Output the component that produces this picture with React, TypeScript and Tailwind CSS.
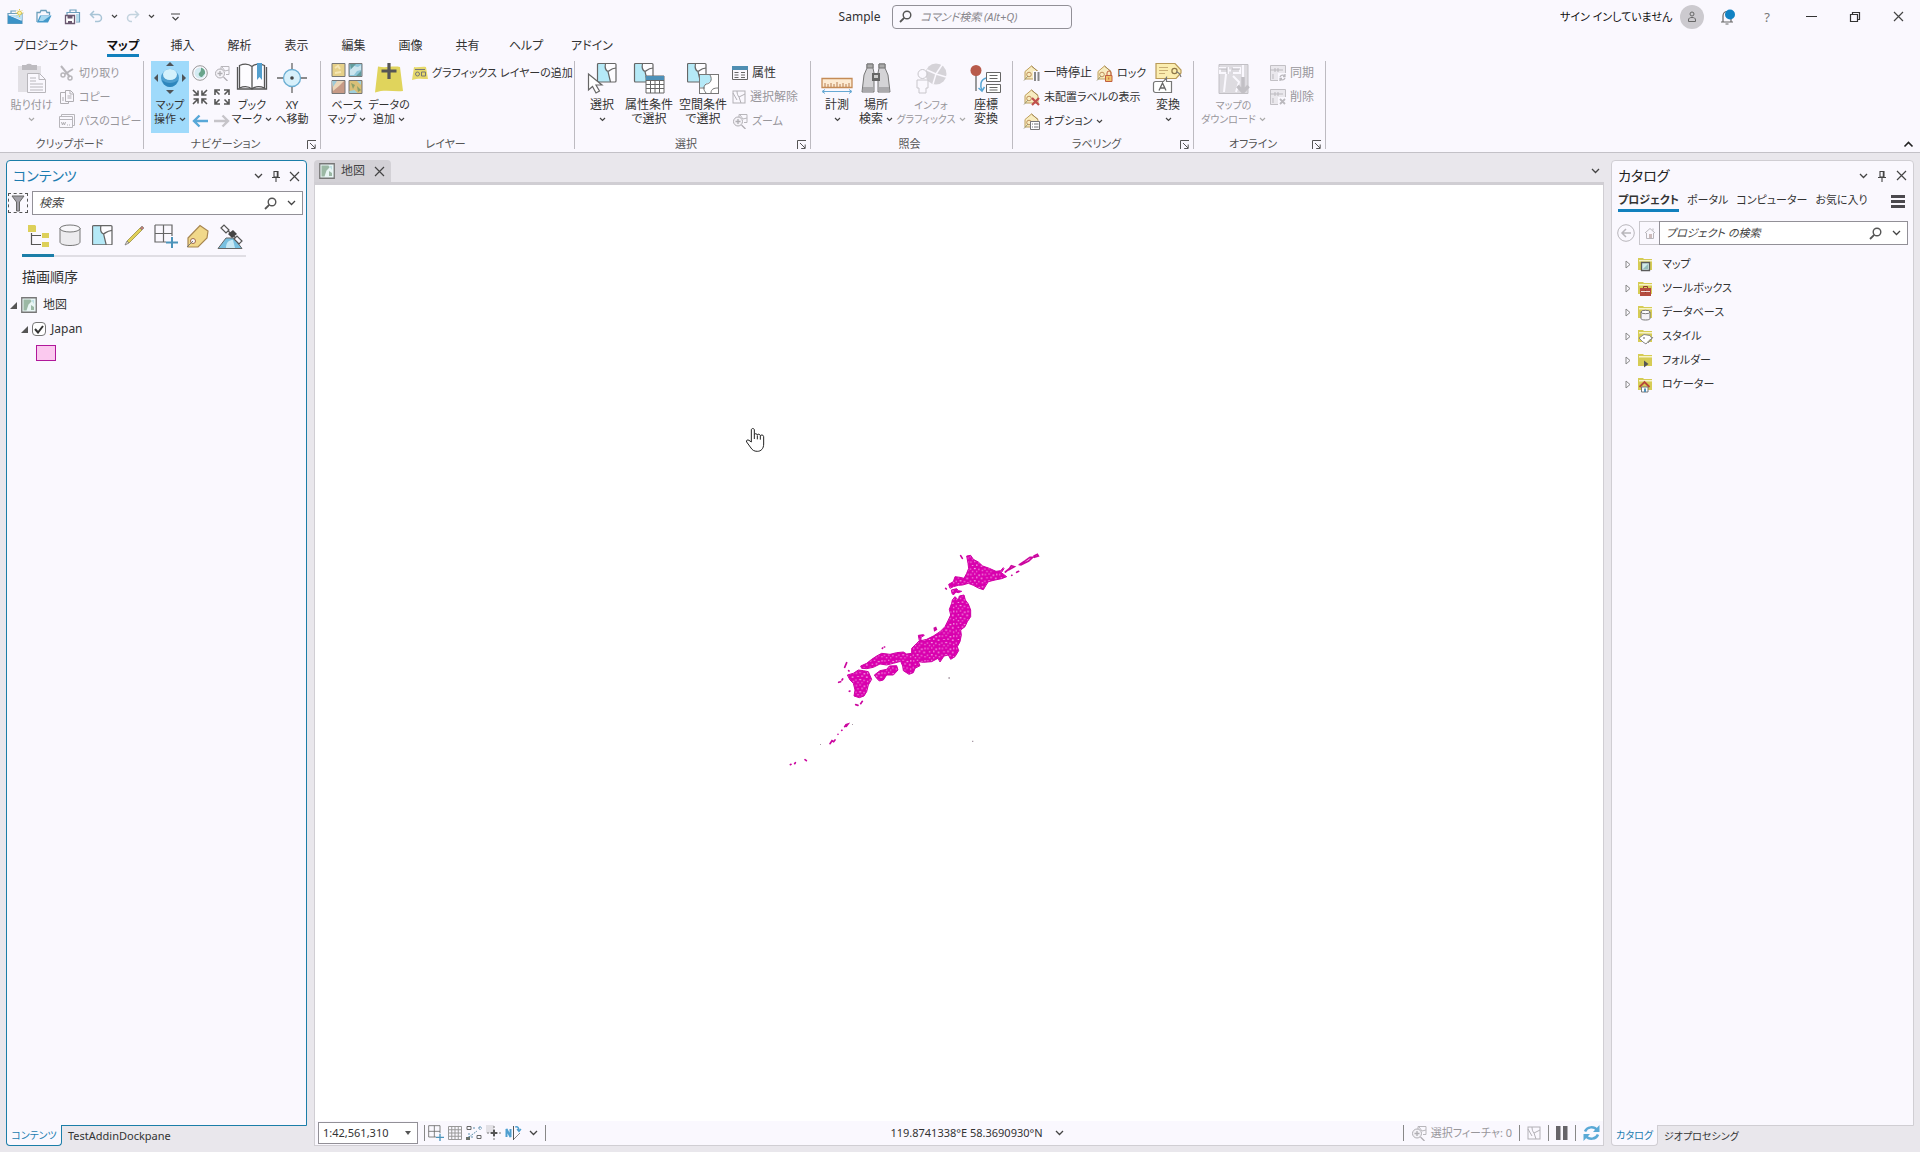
import React, { useState } from "react";
import type { ReactNode } from "react";

type Kids = { children?: ReactNode };

function Svg({ w, h, vb, children }: { w: number; h: number; vb?: string } & Kids) {
  return (
    <svg width={w} height={h} viewBox={vb ?? `0 0 ${w} ${h}`} fill="none" className="shrink-0" aria-hidden="true">
      {children}
    </svg>
  );
}

/* ---------- shared small glyphs ---------- */
const Chevron = ({ color = "#444" }: { color?: string }) => (
  <Svg w={7} h={5}><path d="M1 1l2.5 2.5L6 1" stroke={color} strokeWidth="1.2" /></Svg>
);
const ChevronWide = () => (
  <Svg w={9} h={6}><path d="M1 1l3.5 3.5L8 1" stroke="#444" strokeWidth="1.3" /></Svg>
);
const Pin = () => (
  <Svg w={10} h={12}><path d="M3 1.5h4V7H3zM6.3 1.5V7M1 7.5h8M5 8v4" stroke="#444" strokeWidth="1.1" /></Svg>
);
const Close = () => (
  <Svg w={11} h={11}><path d="M1 1l9 9M10 1l-9 9" stroke="#444" strokeWidth="1.2" /></Svg>
);
const Search = () => (
  <Svg w={13} h={13}><circle cx="8" cy="5" r="3.8" stroke="#555" strokeWidth="1.4" /><path d="M5.2 7.8L1 12" stroke="#555" strokeWidth="1.8" /></Svg>
);
const Expanded = () => <Svg w={7} h={7}><path d="M7 0v7H0z" fill="#555" /></Svg>;
const Collapsed = () => <Svg w={6} h={9}><path d="M1 1l4 3.5L1 8z" stroke="#888" /></Svg>;
const Launcher = () => (
  <Svg w={9} h={9}><path d="M.5 9V.5H9" stroke="#555" /><path d="M3 3l5 5M8.2 4.5v4h-4" stroke="#555" /></Svg>
);

/* ---------- quick access icons ---------- */
const NewProject = () => (
  <Svg w={17} h={16}>
    <path d="M1 4.5h14v10H1zM4 4V2h5" stroke="#6d9fbc" strokeWidth="1.2" /><path d="M1 6l14 6v2.500H1z" fill="#3b93c7" /><path d="M1 6h14v5L7 8z" fill="#b9e0f3" />
    <circle cx="12.500" cy="4" r="2" fill="#fff3a8" stroke="#dcc64a" /><path d="M12.500 0v1M12.500 7v1M8.500 4h1M15.500 4h1M9.800 1.300l.6.6M15.200 1.300l-.6.6M9.800 6.700l.6-.6" stroke="#dcc64a" />
  </Svg>
);
const OpenProject = () => (
  <Svg w={16} h={15}><path d="M1 13V3.500h3l1-2h5l1 2h2.500V6" stroke="#6d9fbc" strokeWidth="1.300" /><path d="M4 6.500h11.500L12 13.500H1z" fill="#4398c9" /><path d="M5 7h9l-7 5H3z" fill="#a9d8f0" /></Svg>
);
const SaveProject = () => (
  <Svg w={17} h={16}><path d="M3 6V3.500h12.500V13H12M6 3V1h6v2" stroke="#6d9fbc" strokeWidth="1.200" /><path d="M12 5h3v7h-3z" fill="#b6dcec" /><path d="M1.500 6.500h9v8h-9z" stroke="#6b5870" strokeWidth="1.300" fill="#fff" /><path d="M3.500 7h5v2.500h-5zM4 12h4v2.500H4z" fill="#6b5870" /></Svg>
);
const Undo = () => <Svg w={14} h={13}><path d="M5 1L1.500 4.500 5 8M1.500 4.500H9a3.500 3.500 0 010 7H6" stroke="#a8c4d6" strokeWidth="1.500" /></Svg>;
const Redo = () => <Svg w={14} h={13}><path d="M9 1l3.500 3.500L9 8M12.500 4.500H5a3.500 3.500 0 000 7h1" stroke="#c3d3de" strokeWidth="1.500" /></Svg>;

/* ---------- clipboard icons ---------- */
const Paste = () => (
  <Svg w={30} h={32}>
    <rect x="1" y="4" width="23" height="26" fill="#e2e0e5" /><path d="M5 3h4a3.500 2.500 0 016 0h5v5H5z" fill="#bdbbc0" />
    <path d="M10.500 11.500h12l6 6v13h-18z" fill="#faf8fe" stroke="#b8b6bb" /><path d="M22 11.500v6h6M13 16h6M13 19h6M13 22h13M13 25h13M13 28h13" stroke="#b8b6bb" />
  </Svg>
);
const Cut = () => <Svg w={16} h={16}><path d="M2 1l9 11M14 4L6 9" stroke="#b8b6bb" strokeWidth="2" /><circle cx="4" cy="10" r="2" stroke="#b8b6bb" strokeWidth="1.500" /><circle cx="11" cy="13" r="2" stroke="#b8b6bb" strokeWidth="1.500" /></Svg>;
const Copy = () => <Svg w={16} h={16}><path d="M1.500 3.500h5l3 3v8h-8z" stroke="#b0aeb3" /><path d="M6.500 1.500h5l3 3v8h-8z" fill="#faf8fe" stroke="#b0aeb3" /><path d="M11 1.500V5h3M8.500 7h4M8.500 9h4M3 9h2M3 11h2" stroke="#b0aeb3" /></Svg>;
const CopyPath = () => <Svg w={16} h={16}><path d="M2.500 3V1.500h13v11H14M.5 3.500h13v11H.5zM.5 6.500h13" stroke="#b8b6bb" /><path d="M2.500 9l1 3 1-2.500 1 2.500 1-3M8 12h1M10 12h1" stroke="#b0aeb3" /></Svg>;

/* ---------- navigation icons ---------- */
const Explore = () => (
  <Svg w={32} h={32}>
    <circle cx="16" cy="16" r="9" fill="#4e9fd0" /><ellipse cx="16" cy="12.500" rx="7" ry="5.500" fill="#d4f1fc" /><path d="M8 18c4 4 12 4 16 0-1 4-4 7-8 7s-7-3-8-7z" fill="#2d86bd" />
    <path d="M16 0l4 4h-8zM16 32l4-4h-8zM0 16l4-4v8zM32 16l-4-4v8z" fill="#4f5358" />
  </Svg>
);
const Globe = () => <Svg w={16} h={16}><circle cx="8" cy="8" r="7.300" stroke="#999" /><circle cx="8" cy="8" r="5.500" fill="#d4ebf2" /><path d="M9 2.500c3 1 4.500 3 4 6l-3 3.500c-2 0-4-2-3-4 2-1 2-3 2-5.500z" fill="#69a48b" /></Svg>;
const ZoomSel = () => <Svg w={16} h={16}><path d="M7 1.500h8v8h-3M7 1.500V5M15 5l-4 1-3-4" stroke="#b8b6bb" /><circle cx="6" cy="8.500" r="4.500" fill="#f4f2f7" stroke="#b0aeb3" /><path d="M3.500 8.500h5M6 6v5M9.500 12l4 4" stroke="#b0aeb3" strokeWidth="1.300" /></Svg>;
const ZoomIn = () => <Svg w={16} h={16}><path d="M1 1l4.500 4.500M15 1l-4.500 4.500M1 15l4.500-4.500M15 15l-4.500-4.500M1.500 6H6V1.500M14.500 6H10V1.500M1.500 10H6v4.500M14.500 10H10v4.500" stroke="#555" strokeWidth="1.600" /></Svg>;
const ZoomOut = () => <Svg w={16} h={16}><path d="M1.500 1.500l4 4M14.500 1.500l-4 4M1.500 14.500l4-4M14.500 14.500l-4-4M1 6V1h5M15 6V1h-5M1 10v5h5M15 10v5h-5" stroke="#555" strokeWidth="1.600" /></Svg>;
const Prev = () => <Svg w={16} h={14}><path d="M7.500 1.500L2 7l5.500 5.500M2 7h14" stroke="#58a8d8" strokeWidth="2.400" /></Svg>;
const Next = () => <Svg w={16} h={14}><path d="M8.500 1.500L14 7l-5.500 5.500M14 7H0" stroke="#c6c4c9" strokeWidth="2.400" /></Svg>;
const Bookmarks = () => (
  <Svg w={32} h={32}>
    <path d="M1.500 5v22h29V5" stroke="#555" strokeWidth="1.300" /><path d="M3.500 26V3.500C8 1.500 13 2 16 4.500c3-2.500 8-3 12.500-1V26C24 24 19 24.500 16 27c-3-2.500-8-3-12.500-1zM16 4.500V27" fill="#fdfcff" stroke="#555" strokeWidth="1.300" />
    <path d="M21 1h5v17l-2.500-3-2.500 3z" fill="#539fce" />
  </Svg>
);
const GoXY = () => <Svg w={32} h={32}><circle cx="16" cy="16" r="8.500" fill="#d7f0fb" stroke="#6baed3" strokeWidth="1.300" /><circle cx="16" cy="16" r="1.800" fill="#444" /><path d="M16 1v6M16 25v6M1 16h6M25 16h6" stroke="#666" strokeWidth="1.300" /></Svg>;

/* ---------- layer icons ---------- */
const Basemap = () => (
  <Svg w={32} h={32}>
    <path d="M1 1.500h13v13H1z" fill="#e6d089" stroke="#777" /><path d="M4 6l3-2 2 3M4 11l6-1" stroke="#f6e7b5" strokeWidth="2" />
    <path d="M18 1.500h13v13H18z" fill="#8fc5d9" stroke="#777" /><path d="M19 8l4-4 4 1 3-2v5l-4 1-3 4h-4z" fill="#cde5ee" /><path d="M19 2h6l-5 5zM25 14l5-5v5z" fill="#639c9c" />
    <path d="M1 18.500h13v13H1z" fill="#c79a86" stroke="#777" /><path d="M1 19h12L8 24l-6 5z" fill="#ead5b8" /><path d="M1 19h5l-4 6z" fill="#9fcad8" />
    <path d="M18 18.500h13v13H18z" fill="#d9bf77" stroke="#777" /><path d="M20 21l4 2-2 4zM26 24l4 4-3 2z" fill="#8a9f68" /><path d="M18.500 29l5-1 3 3h-8zM26 19h4v4z" fill="#9fd0dd" />
  </Svg>
);
const AddData = () => <Svg w={32} h={32}><path d="M5 4.500c8 2 14-1 22 .5l3 24c-9 1-18-2-28 1.500z" fill="#e0d45c" /><path d="M16 1v16M8.500 9h15" stroke="#555" strokeWidth="3.200" /></Svg>;
const GraphicsLayer = () => <Svg w={16} h={16}><path d="M2 2c4 1 8-1 12 0l2 12c-5 0-10-1-16 1z" fill="#e6d96a" /><path d="M3 4.500h10" stroke="#777" /><circle cx="5.500" cy="9" r="2" stroke="#777" /><path d="M9.500 7h4v4h-4z" stroke="#777" /></Svg>;

/* ---------- selection icons ---------- */
const PolyTile = ({ x = 0, y = 0, s = 19, c = "#666" }: { x?: number; y?: number; s?: number; c?: string }) => (
  <g transform={`translate(${x} ${y}) scale(${s / 19})`}>
    <path d="M.5 .5h18.500v18.500H.5z" fill="#fdfcff" /><path d="M.5 .5h8c-1 4 0 6 2.500 8l2.500 10.500H.5z" fill="#b5e9f7" />
    <path d="M8.500 .5c-1 5 0 7 2.500 8l2.500 10.500M11 8.500c2-1 3-3 8-3.500" stroke={c} strokeWidth="1.200" /><rect x=".5" y=".5" width="18.500" height="18.500" rx="1" stroke={c} strokeWidth="1.200" />
  </g>
);
const SelectTool = () => <Svg w={32} h={32}><PolyTile x={11} y={1} /><path d="M2.500 12v16l4-3.500 3.500 6.500 3.500-2L10 23h6z" fill="#fff" stroke="#666" strokeWidth="1.200" /></Svg>;
const SelectAttr = () => <Svg w={32} h={32}><PolyTile x={1} y={1} /><path d="M13 14h18v17H13z" fill="#fff" stroke="#666" /><path d="M13 14h18v4H13z" fill="#4d90b8" /><path d="M13 18.500h18M13 22.500h18M13 26.500h18M17.500 18v13M22 18v13M26.500 18v13" stroke="#666" /></Svg>;
const SelectLoc = () => <Svg w={32} h={32}><PolyTile x={0} y={1} /><rect x="12.500" y="12.500" width="19" height="19" fill="#fff" stroke="#777" /><path d="M13 13h10c3 5 0 9-4 8l-2 5-4-1z" fill="#b5e9f7" /><path d="M23 13c3 5 0 9-4 9-3 3-3 5 0 9M13 26h5M24 31c0-4 3-5 7-5" stroke="#777" /></Svg>;
const Attributes = () => <Svg w={16} h={14}><path d="M.5 .5h15v13H.5z" stroke="#666" /><path d="M0 0h16v4H0z" fill="#4f8eb2" /><path d="M2.500 6.500h4M9 6.500h4M2.500 9h4M9 9h4M2.500 11.500h4M9 11.500h4" stroke="#666" /></Svg>;
const ClearSel = () => <Svg w={14} h={14}><rect x="1" y="1" width="12" height="12" stroke="#b2b0b5" /><path d="M5 1c0 3 1 5 2 6l2 6M7 7l6-3M1 3l4 7" stroke="#b2b0b5" /></Svg>;

/* ---------- inquiry icons ---------- */
const Measure = () => <Svg w={32} h={32}><path d="M1 16.500h30v9H1z" fill="#fdebd3" stroke="#c58b56" strokeWidth="1.300" /><path d="M4 25v-4M7 25v-3M10 25v-4M13 25v-3M16 25v-5M19 25v-3M22 25v-4M25 25v-3M28 25v-4" stroke="#b87f50" /><path d="M2 29.500h28M4 27.500l-3 2 3 2M28 27.500l3 2-3 2" stroke="#68a9d3" /></Svg>;
const Binoculars = () => <Svg w={32} h={32}><path d="M7 2h6v4l1 5v19H2l2-17 3-7zM19 2h6v4l3 7 2 17H18V11l1-5z" fill="#d4d3d6" stroke="#777" /><path d="M7 2h6v4H7zM19 2h6v4h-6z" fill="#aaa" stroke="#777" /><path d="M12 11h8v8h-8z" fill="#666" /><path d="M14 13h4v3h-4z" fill="#ccc" /><path d="M3 25h10v5H3zM19 25h10v5H19z" fill="#aaa9ac" /></Svg>;
const Infographics = () => <Svg w={32} h={32}><circle cx="21" cy="12" r="10.500" fill="#d5d3d8" /><path d="M21 12l6-9M21 12l10 3M21 12l-3 10M21 12L12 8" stroke="#faf8fe" strokeWidth="1.500" /><circle cx="7.500" cy="12" r="4.500" fill="#faf8fe" stroke="#c8c6cb" /><path d="M2 18h11v8h-2v5H4v-5H2z" fill="#faf8fe" stroke="#c8c6cb" /></Svg>;
const CoordConv = () => <Svg w={32} h={32}><path d="M6 9v20" stroke="#666" strokeWidth="1.300" /><circle cx="6" cy="8.500" r="5.500" fill="#b85a4b" /><path d="M16.500 10.500h14v9h-14zM16.500 22.500h14v8h-14z" fill="#fff" stroke="#666" /><path d="M19.500 13.500h8M19.500 16.500h8M19.500 25.500h8M19.500 28h8" stroke="#666" /><path d="M16 16c-6 2-6 8-4 12M8.500 26l3.500 3 2.500-4" stroke="#57a5d4" strokeWidth="1.500" /></Svg>;

/* ---------- labeling icons ---------- */
const TagHouse = ({ children }: Kids) => (
  <Svg w={17} h={17}>
    <path d="M2 14V6.500L8.500 1 15 6.500V14z" fill="#f8ecc0" stroke="#bf9f5c" /><path d="M8.500 1l6.500 5.500" stroke="#a58a58" /><circle cx="6" cy="9.500" r="2.300" stroke="#bf8f5a" /><path d="M1 15.500L5 11" stroke="#997" />
    {children}
  </Svg>
);
const LabelPause = () => <TagHouse><path d="M10 6h7v11h-7z" fill="#faf8fe" /><path d="M12 7v9M15.500 7v9" stroke="#888" strokeWidth="2" /></TagHouse>;
const LabelLock = () => <TagHouse><path d="M9.500 10.500h6.500v6H9.500z" fill="#f0c36a" stroke="#c15f40" /><path d="M11 10V8a2 2 0 014 0v2" stroke="#c15f40" /><path d="M12.750 12.500v2" stroke="#c15f40" /></TagHouse>;
const LabelUnplaced = () => <TagHouse><path d="M9 9l7 7M16 9l-7 7" stroke="#c0504d" strokeWidth="2.200" /></TagHouse>;
const LabelOptions = () => <TagHouse><path d="M7.500 8.500h9v8h-9z" fill="#fff" stroke="#777" /><path d="M9 11h1M11 11h4.500M9 14h1M11 14h4.500" stroke="#777" /></TagHouse>;
const LabelConvert = () => <Svg w={32} h={32}><path d="M4 1.500h19l6 6.500v3l-5 5.500H4z" fill="#fbedb0" stroke="#b99a58" strokeWidth="1.200" /><path d="M7 5.500h9M7 8.500h9M7 11.500h6" stroke="#c9ae74" /><circle cx="22.500" cy="9" r="2.600" stroke="#8f7747" strokeWidth="1.200" /><path d="M24 10c3 0 4 2 5 5" stroke="#777" strokeWidth="1.200" /><path d="M3.500 19.500h8l3-4v4h5v11h-16a2 2 0 01-2-2v-7a2 2 0 012-2z" fill="#fff" stroke="#777" strokeWidth="1.200" /><path d="M7 28.500l3.500-7.500 3.500 7.500M8.300 26h4.400" stroke="#666" strokeWidth="1.300" /></Svg>;

/* ---------- offline icons ---------- */
const DownloadMap = () => <Svg w={32} h={32}><path d="M1 2.500h29v29H1z" fill="#dddbe0" stroke="#c2c0c5" /><path d="M2 6h8v5H2zM14 6h8v5h-8zM10 8.500h4M25 3v14M8 12l-2 18M15 14l6 6-3 10" stroke="#faf8fe" strokeWidth="2" /><path d="M1 7h8M14 7h8M9 5v7M14 5v7" stroke="#bbb9be" /><path d="M25 15v14M19.500 24l5.500 6 5.500-6" stroke="#c2c0c5" strokeWidth="3.500" /></Svg>;
const OfflineSmall = ({ x }: { x?: boolean }) => <Svg w={16} h={16}><path d="M.5 .5h15v15H.5z" fill="#eae8ed" stroke="#c2c0c5" /><path d="M0 5h5M8 5h5M5 3v4M8 3v4M5 5h3M3 9v5" stroke="#bbb9be" /><path d="M8 8h8v8H8z" fill="#faf8fe" />{x ? <path d="M10 10l5 5M15 10l-5 5" stroke="#bbb9be" strokeWidth="1.800" /> : <path d="M10 12a3 3 0 015-1M15 13a3 3 0 01-5 1M15 9v2.500h-2M10 16v-2.500h2" stroke="#bbb9be" strokeWidth="1.300" />}</Svg>;

/* ---------- ribbon parts ---------- */
const sizes = { base: "text-[12px]", small: "text-[11px]", tiny: "text-[10px]" };
type Size = keyof typeof sizes;

function Big({ icon, lines, w, off, arrow, on, size = "base" }: { icon: ReactNode; lines: [string, string?]; w: string; off?: boolean; arrow?: boolean; on?: boolean; size?: Size }) {
  const c = off ? "#aaa" : "#444";
  return (
    <button className={`flex h-[72px] shrink-0 flex-col items-center pt-px ${w} ${on ? "bg-[#9fdafb]" : ""} ${off ? "text-[#98969b]" : "text-[#333]"}`}>
      {icon}
      <span className={`mt-1 whitespace-nowrap text-center leading-[14px] ${sizes[size]}`}>{lines[0]}</span>
      <span className={`flex h-[14px] items-center justify-center gap-[3px] whitespace-nowrap leading-[14px] ${sizes[size]}`}>
        {lines[1]}
        {arrow && <Chevron color={c} />}
      </span>
    </button>
  );
}
function Row({ icon, text, off, arrow, size = "base" }: { icon: ReactNode; text: string; off?: boolean; arrow?: boolean; size?: Size }) {
  return (
    <button className={`flex h-6 items-center gap-1 whitespace-nowrap ${sizes[size]} ${off ? "text-[#98969b]" : "text-[#333]"}`}>
      {icon}
      {text}
      {arrow && <Chevron />}
    </button>
  );
}
function Group({ w, name, launcher, children }: { w: string; name: string; launcher?: boolean } & Kids) {
  return (
    <section className={`flex h-[88px] shrink-0 flex-col border-r border-[#bdbbc1] ${w}`}>
      <div className="flex flex-1 items-start">{children}</div>
      <div className="flex h-[10px] items-center pr-1 text-[11px] leading-[10px] text-[#555]">
        <span className="flex-1 text-center">{name}</span>
        {launcher && <button aria-label={`${name} オプション`}><Launcher /></button>}
      </div>
    </section>
  );
}

/* ---------- contents pane icons ---------- */
const Funnel = () => <Svg w={14} h={17}><path d="M1 1h12L8.500 7v9h-3V7z" fill="#a3a1a9" stroke="#666" /></Svg>;
const TreeIcon = () => <Svg w={24} h={24}><path d="M2 1h7l1 1v6H2zM16 9h7v5h-7zM16 18h7v5h-7z" fill="#ddd05a" /><path d="M5.500 9v11.500H15M5.500 11.500H15" stroke="#555" strokeWidth="1.200" /></Svg>;
const Cylinder = () => <Svg w={22} h={22}><path d="M1 4v14c0 2 4 3.500 10 3.500s10-1.500 10-3.500V4" fill="#ecebee" stroke="#777" /><ellipse cx="11" cy="4.500" rx="10" ry="3.500" fill="#f8f7fa" stroke="#777" /></Svg>;
const Pencil = () => <Svg w={22} h={22}><path d="M4 17L17 4l2 2L6 19z" fill="#e0d058" stroke="#9b8f45" strokeWidth=".8" /><path d="M17 4l2-2 2 2-2 2z" fill="#c07f72" stroke="#777" strokeWidth=".6" /><path d="M4 17l-2 4 4-2z" fill="#e8d9c4" stroke="#777" strokeWidth=".8" /></Svg>;
const GridPlus = ({ s = 24 }: { s?: number }) => <Svg w={s} h={s} vb="0 0 24 24"><path d="M1 1h17v11M1 1v17h11M9.500 1v17M1 9.500h17" stroke="#666" strokeWidth="1.200" /><path d="M18 13v11M12 18.500h12" stroke="#4c93ba" strokeWidth="2" /></Svg>;
const Tag = () => <Svg w={24} h={24}><path d="M2 14L14 1.500l8 5.500-1 7-9 9H2z" fill="#f1d88a" stroke="#a88650" strokeWidth="1.200" /><circle cx="7" cy="17" r="2.500" fill="#faf8fe" stroke="#a06a48" /><path d="M1 23l6-6" stroke="#777" /></Svg>;
const Satellite = () => <Svg w={26} h={26}><path d="M1 24.500L9 14h8l8 10.500z" fill="#78c0e0" stroke="#666" /><path d="M9 24c0-6 3-8 7-8l2 8z" fill="#c8e9f5" /><path d="M9 5l12 11" stroke="#555" strokeWidth="1.200" /><path d="M4 4l3-3 5 5-3 3zM17 15l3-3 5 5-3 3z" fill="#faf8fe" stroke="#555" strokeWidth="1.200" /><path d="M11 10l5-4 4 4-5 4z" fill="#444" /></Svg>;
const MapIcon = () => <Svg w={16} h={16}><path d="M.75 .75h14.500v14.500H.75z" fill="#e8f5f4" stroke="#777" strokeWidth="1.300" /><path d="M2.500 2.500h7l1 2-3 3-2 6h-3zM10 8l3 2v3h-3z" fill="#9bb8a4" /><path d="M10 3h3v4z" fill="#bfe0e4" /></Svg>;

/* ---------- catalog icons ---------- */
const Folder = ({ children }: Kids) => (
  <Svg w={17} h={17}><path d="M1 2h5l1 1h8v11H1z" fill="#d6cc55" /><path d="M2 4h13v1.500H2z" fill="#f7f3c9" />{children}</Svg>
);
const catalogItems: [string, ReactNode][] = [
  ["マップ", <Folder><path d="M4.500 6.500h8v8h-8z" fill="#cfe9ea" stroke="#5b5b5b" strokeWidth="1.300" /><path d="M6 13l5-5v5z" fill="#94bcb8" /></Folder>],
  ["ツールボックス", <Folder><path d="M3 8h11v8H3z" fill="#b44b3f" /><path d="M6.500 8V6.500h4V8M8.500 10v3" stroke="#8d3a31" /><path d="M4 11.500h9" stroke="#f3dcd8" /></Folder>],
  ["データベース", <Folder><path d="M4 8v6.500c0 1 2 1.500 4.500 1.500s4.500-.5 4.500-1.500V8" fill="#f4f3f6" stroke="#777" /><ellipse cx="8.500" cy="8" rx="4.500" ry="1.700" fill="#fff" stroke="#777" /></Folder>],
  ["スタイル", <Folder><path d="M2 10l5-3.500 6 1 2 3-3 2-3 3.500-3-2z" fill="#fff" stroke="#888" /><circle cx="7" cy="10" r="1" fill="#999" /><path d="M11 15l5-6" stroke="#888" /></Folder>],
  ["フォルダー", <Folder><path d="M7 8.500l4.500 3.500L7 15.500z" fill="#555" /></Folder>],
  ["ロケーター", <Folder><path d="M2.500 11l5-5 5 5" stroke="#b6473b" strokeWidth="1.800" /><path d="M4.500 11h6.500v5H4.500z" fill="#fff" stroke="#777" /><path d="M7 12.500h2V16H7z" fill="#4d8fb8" /></Folder>],
];

function JapanLayer() {
  return (
    <svg width="438" height="504" viewBox="0 3 1314 1512" className="shrink-0" role="img" aria-label="Japan">
      <defs>
        <pattern id="muni" width="43" height="37" patternUnits="userSpaceOnUse">
          <rect width="43" height="37" fill="#d900ae" />
          <path d="M3 4h4v3H3zM15 2h3v4h-3zM27 6h5v3h-5zM38 3h3v5h-3zM8 14h4v3H8zM21 12h3v5h-3zM34 16h5v3h-5zM2 24h3v4H2zM14 23h5v3h-5zM27 25h3v4h-3zM37 29h4v3h-4zM8 32h4v3H8zM20 33h4v2h-4z" fill="#f7b6e9" />
        </pattern>
      </defs>
      <g fill="url(#muni)" stroke="#cf00a6" strokeWidth="3" strokeLinejoin="round">
        <path d="M680 468L692 466 700 478 715 486 728 498 748 505 768 514 782 512 790 503 792 506 784 518 800 530 785 536 765 540 745 545 738 556 730 569 715 564 700 556 685 550 668 555 655 556 640 560 630 565 626 553 640 545 645 530 660 532 672 535 680 520 686 505 684 490Z" />
        <path d="M634 570L650 566 655 572 665 574 655 578 648 576 640 585 636 580Z" />
        <path d="M645 590L655 600 658 588 672 585 676 600 685 612 692 630 692 650 682 665 675 680 662 690 664 705 660 725 652 740 656 752 645 770 632 778 625 765 612 768 600 786 594 775 575 785 550 787 535 785 540 797 525 805 520 818 507 823 490 812 488 798 482 784 460 790 440 795 420 792 400 802 380 806 365 805 362 798 380 790 395 778 410 768 425 760 450 763 470 758 490 756 500 762 515 760 515 745 530 730 538 722 535 706 550 704 553 706 543 712 543 722 560 718 580 708 600 695 615 680 625 660 632 645 628 628 635 610 637 600Z" />
        <path d="M403 825L420 812 440 808 448 798 470 797 474 810 460 825 440 825 430 840 418 843 410 835Z" />
        <path d="M322 825L340 820 355 810 370 812 385 815 395 838 385 855 380 875 372 888 358 893 342 888 345 870 340 850 330 840Z" />
      </g>
      <g stroke="#cb079f" strokeWidth="5" strokeLinecap="round" fill="none">
        <path d="M662 467l5 8M796 516l12-10 6-9 9 3-18 10M838 494l18-12 14-10 8 0-12 11-24 12M882 468l10-5 3 5-12 4M830 517l6-3M617 565l2 2M314 802l6-14M296 847l6-2M306 840l2-3M326 812l1 1M328 874l2-1M347 914l7 2M362 911l5-7M427 745l1-1M433 741l1 0M583 685l4-2 2 5-5 3zM314 980l4-6 6-2-5 7M305 991l1 0M270 1031l6-9 5 3 4-5M294 1003l0 0M151 1094l2-1M164 1091l2-3M195 1079l4 3M815 526l1 0" />
      </g>
      <g fill="#a99aa6"><path d="M625 832h5v4h-5zM696 1022h4v4h-4zM336 972h3v3h-3zM240 1032h3v3h-3z" /></g>
      <path d="M34 126V90c0-6 9-6 9 0v14c1-4 8-4 9 1 1-4 8-3 9 2 1-3 10-3 10 3v22c0 14-8 22-19 22-10 0-15-4-19-10l-13-18c-3-5 3-8 7-5zM43 104v13M52 106v12M61 108v11" fill="#fff" stroke="#222" strokeWidth="3" />
    </svg>
  );
}

const tabs: [string, string][] = [
  ["プロジェクト", "w-[92px]"], ["マップ", "w-[62px]"], ["挿入", "w-[57px]"], ["解析", "w-[57px]"], ["表示", "w-[57px]"],
  ["編集", "w-[57px]"], ["画像", "w-[57px]"], ["共有", "w-[57px]"], ["ヘルプ", "w-[60px]"], ["アドイン", "w-[72px]"],
];
const paneTabs: [string, ReactNode][] = [
  ["描画順序", <TreeIcon />], ["データ ソース別", <Cylinder />], ["選択状態別", <Svg w={21} h={21}><PolyTile x={0} y={1} s={20} /></Svg>],
  ["編集状態別", <Pencil />], ["スナップ別", <GridPlus />], ["ラベル別", <Tag />], ["画像別", <Satellite />],
];

export default function App() {
  const [visible, setVisible] = useState(true);
  return (
    <div className="flex h-screen min-w-[1400px] flex-col overflow-hidden bg-[#e9e7ec] text-[12px] leading-4 text-[#333] [font-family:'Noto_Sans','Noto_Sans_CJK_JP',sans-serif] [font-feature-settings:'palt']">
      {/* title bar and ribbon */}
      <header className="shrink-0 border-b border-[#c3c1c7] bg-[#faf8fe]">
        <div className="flex h-[33px] items-center">
          <div className="flex flex-1 items-center pl-[7px]">
            <button aria-label="新しいプロジェクト" className="mr-3"><NewProject /></button>
            <button aria-label="開く" className="mr-3"><OpenProject /></button>
            <button aria-label="保存" className="mr-2"><SaveProject /></button>
            <button aria-label="元に戻す" className="mr-2"><Undo /></button>
            <button aria-label="履歴" className="mr-2"><Chevron /></button>
            <button aria-label="やり直し" className="mr-2"><Redo /></button>
            <button aria-label="履歴" className="mr-4"><Chevron /></button>
            <button aria-label="カスタマイズ"><Svg w={9} h={8}><path d="M0 1h9M1.500 4l3 3 3-3" stroke="#444" strokeWidth="1.200" /></Svg></button>
          </div>
          <span className="mr-3">Sample</span>
          <label className="flex h-6 w-[180px] items-center gap-2 rounded border border-[#929097] px-[6px]">
            <Search />
            <input aria-label="コマンド検索" placeholder="コマンド検索 (Alt+Q)" className="w-full min-w-0 bg-transparent text-[11px] italic outline-none placeholder:text-[#88868c]" />
          </label>
          <div className="flex flex-1 items-center justify-end pr-4">
            <button className="mr-2 text-[11px] text-[#111]">サイン インしていません</button>
            <button aria-label="アカウント" className="mr-4 flex size-6 items-center justify-center rounded-full bg-[#cccacf]">
              <Svg w={10} h={12}><circle cx="5" cy="3" r="2" stroke="#666" /><path d="M1.500 10.500V9C1.500 7 3 6.500 5 6.500S8.500 7 8.500 9v1.500z" stroke="#666" /></Svg>
            </button>
            <button aria-label="通知" className="mr-7">
              <Svg w={16} h={16}><path d="M1 13h12M3 13V7c0-6 8-6 8 0v6M5.500 15h3" stroke="#666" strokeWidth="1.200" /><circle cx="10" cy="5.500" r="5" fill="#1182c3" /></Svg>
            </button>
            <button aria-label="ヘルプ" className="mr-9 text-[13px] text-[#777]">?</button>
            <button aria-label="最小化" className="mr-8"><Svg w={11} h={11}><path d="M0 5.500h11" stroke="#333" /></Svg></button>
            <button aria-label="元に戻す (縮小)" className="mr-8"><Svg w={12} h={12}><path d="M1.500 3.500h7v7h-7zM3.500 3.500v-2h7v7h-2" stroke="#333" strokeWidth="1.200" /></Svg></button>
            <button aria-label="閉じる"><Close /></button>
          </div>
        </div>
        <nav className="flex h-[25px]">
          {tabs.map(([t, w], i) => (
            <button key={t} className={`flex flex-col items-center pt-1 ${w} ${i === 1 ? "font-bold text-[#111]" : ""}`}>
              <span className={`leading-[17px] ${i === 1 ? "border-b-[3px] border-[#1180bd]" : ""}`}>{t}</span>
            </button>
          ))}
        </nav>
        <div className="flex h-[94px] items-start pt-[3px]">
          <Group w="w-[144px]" name="クリップボード">
            <Big w="w-[59px] pl-1" off arrow icon={<Paste />} lines={["貼り付け"]} size="small" />
            <div><Row off icon={<Cut />} text="切り取り" size="small" /><Row off icon={<Copy />} text="コピー" size="small" /><Row off icon={<CopyPath />} text="パスのコピー" size="small" /></div>
          </Group>
          <Group w="w-[177px]" name="ナビゲーション" launcher>
            <div className="w-[7px]" />
            <Big w="w-[38px]" on arrow size="small" icon={<Explore />} lines={["マップ", "操作"]} />
            <div className="grid w-[44px] grid-cols-2 justify-items-center">
              {[<Globe />, <ZoomSel />, <ZoomIn />, <ZoomOut />, <Prev />, <Next />].map((icon, i) => (
                <button key={i} aria-label={["全体表示", "選択へズーム", "縮小", "拡大", "前の範囲", "次の範囲"][i]} className="flex h-6 items-center">{icon}</button>
              ))}
            </div>
            <Big w="w-[38px]" arrow size="small" icon={<Bookmarks />} lines={["ブック", "マーク"]} />
            <Big w="w-[42px]" size="small" icon={<GoXY />} lines={["XY", "へ移動"]} />
          </Group>
          <Group w="w-[254px]" name="レイヤー">
            <div className="w-[5px]" />
            <Big w="w-[42px]" arrow size="small" icon={<Basemap />} lines={["ベース", "マップ"]} />
            <Big w="w-[42px]" arrow size="small" icon={<AddData />} lines={["データの", "追加"]} />
            <div className="pl-[2px]"><Row size="small" icon={<GraphicsLayer />} text="グラフィックス レイヤーの追加" /></div>
          </Group>
          <Group w="w-[236px]" name="選択" launcher>
            <div className="w-[6px]" />
            <Big w="w-[42px]" arrow icon={<SelectTool />} lines={["選択"]} />
            <Big w="w-[52px]" icon={<SelectAttr />} lines={["属性条件", "で選択"]} />
            <Big w="w-[56px]" icon={<SelectLoc />} lines={["空間条件", "で選択"]} />
            <div className="pl-px"><Row icon={<Attributes />} text="属性" /><Row off icon={<ClearSel />} text="選択解除" /><Row off size="small" icon={<ZoomSel />} text="ズーム" /></div>
          </Group>
          <Group w="w-[202px]" name="照会">
            <div className="w-[7px]" />
            <Big w="w-[38px]" arrow icon={<Measure />} lines={["計測"]} />
            <Big w="w-[40px]" arrow icon={<Binoculars />} lines={["場所", "検索"]} />
            <Big w="w-[70px]" off arrow size="tiny" icon={<Infographics />} lines={["インフォ", "グラフィックス"]} />
            <Big w="w-[40px]" icon={<CoordConv />} lines={["座標", "変換"]} />
          </Group>
          <Group w="w-[181px]" name="ラベリング" launcher>
            <div className="pl-[10px]">
              <div className="flex gap-1"><Row icon={<LabelPause />} text="一時停止" /><Row size="small" icon={<LabelLock />} text="ロック" /></div>
              <Row size="small" icon={<LabelUnplaced />} text="未配置ラベルの表示" />
              <Row size="small" arrow icon={<LabelOptions />} text="オプション" />
            </div>
            <Big w="ml-auto mr-2 w-[34px]" arrow icon={<LabelConvert />} lines={["変換"]} />
          </Group>
          <Group w="w-[132px]" name="オフライン" launcher>
            <Big w="w-[76px] pl-[3px]" off arrow size="tiny" icon={<DownloadMap />} lines={["マップの", "ダウンロード"]} />
            <div><Row off icon={<OfflineSmall />} text="同期" /><Row off icon={<OfflineSmall x />} text="削除" /></div>
          </Group>
          <button aria-label="リボンを折りたたむ" className="mb-1 ml-auto mr-[6px] self-end"><Svg w={11} h={8}><path d="M1.500 6.500l4-4 4 4" stroke="#222" strokeWidth="1.600" /></Svg></button>
        </div>
      </header>

      <main className="flex min-h-0 flex-1 gap-[7px] px-[6px] pb-[6px] pt-[7px]">
        {/* contents pane */}
        <aside className="flex w-[301px] shrink-0 flex-col">
          <div className="flex-1 rounded-t border border-[#1b7ea8] bg-[#faf8fe]">
            <div className="flex h-[30px] items-center gap-2 pl-[6px] pr-[6px]">
              <h2 className="flex-1 text-[14px] text-[#1c7cb0]">コンテンツ</h2>
              <button aria-label="メニュー"><ChevronWide /></button><button aria-label="固定"><Pin /></button><button aria-label="閉じる"><Close /></button>
            </div>
            <div className="flex items-center gap-1 pl-px pr-[3px]">
              <button aria-label="フィルター" className="flex size-5 items-center justify-center border border-dashed border-[#555]"><Funnel /></button>
              <label className="flex h-6 flex-1 items-center gap-[10px] border border-[#929097] bg-white px-[6px]">
                <input aria-label="検索" placeholder="検索" className="min-w-0 flex-1 italic outline-none placeholder:text-[#444]" />
                <Search /><ChevronWide />
              </label>
            </div>
            <div className="ml-[15px] mt-[9px] flex w-fit">
              {paneTabs.map(([t, icon], i) => (
                <button key={t} aria-label={t} className={`flex h-[33px] w-8 justify-center ${i === 0 ? "border-b-[3px] border-[#1b7ea8]" : "border-b-2 border-[#e0dee4]"}`}>{icon}</button>
              ))}
            </div>
            <h3 className="ml-[15px] mt-[10px] text-[14px] leading-5">描画順序</h3>
            <div className="mt-[2px] pl-[3px]">
              <div className="flex h-8 items-center"><Expanded /><span className="ml-1 mr-[6px]"><MapIcon /></span>地図</div>
              <label className="-mt-1 flex h-6 items-center pl-[11px]">
                <Expanded />
                <span className="relative ml-1 mr-[5px] flex size-[14px]">
                  <input type="checkbox" checked={visible} onChange={(e) => setVisible(e.target.checked)} className="size-[14px] appearance-none rounded-sm border border-[#777] bg-white" />
                  {visible && <span className="pointer-events-none absolute left-[2px] top-[3px]"><Svg w={10} h={9}><path d="M1 4l3 3.500L9 1" stroke="#333" strokeWidth="2" /></Svg></span>}
                </span>
                Japan
              </label>
              <button aria-label="Japan シンボル" className="ml-[26px] mt-1 block h-4 w-5 border border-[#b0189a] bg-[#fbc9ef]" />
            </div>
          </div>
          <div className="flex h-5">
            <button className="-mt-px h-[21px] w-[56px] rounded-b border border-t-0 border-[#1b7ea8] bg-[#faf8fe] text-[10px] text-[#1c7cb0]">コンテンツ</button>
            <button className="px-[6px] text-[11px]">TestAddinDockpane</button>
          </div>
        </aside>

        {/* map view */}
        <section className="flex min-w-0 flex-1 flex-col">
          <div className="flex h-[22px] items-center justify-between">
            <div className="flex h-full items-center rounded-t bg-[#d3d1d6] pl-[5px] pr-[6px] text-[#444]">
              <MapIcon /><span className="mx-[6px]">地図</span><button aria-label="タブを閉じる" className="ml-[3px]"><Close /></button>
            </div>
            <button aria-label="タブ一覧" className="mr-1"><ChevronWide /></button>
          </div>
          <div className="flex min-h-0 flex-1 flex-col border border-t-[3px] border-[#d0ced3]">
            <div className="flex min-h-0 flex-1 items-center justify-center overflow-hidden bg-white"><JapanLayer /></div>
            <div className="flex h-6 items-center bg-[#faf8fe] px-[3px]">
              <div className="flex flex-1 items-center gap-[3px]">
                <select aria-label="縮尺" className="h-[22px] w-[100px] appearance-none border border-[#929097] bg-white px-1 text-[11px] leading-4">
                  <option>1:42,561,310</option>
                </select>
                <span className="-ml-4 mr-[10px]"><Svg w={6} h={4}><path d="M0 0h6L3 4z" fill="#555" /></Svg></span>
                <div className="h-4 w-px bg-[#888]" />
                <button aria-label="スナップ"><GridPlus s={16} /></button>
                <button aria-label="グリッド"><Svg w={16} h={16}><path d="M1.500 1.500h13v13h-13zM4.750 1v14M8 1v14M11.250 1v14M1 4.750h14M1 8h14M1 11.250h14" stroke="#999" /></Svg></button>
                <button aria-label="動的制約"><Svg w={17} h={16}><path d="M1 1.500h4v3H1zM11 10.500h4v3h-4z" stroke="#666" /><path d="M7 3h3M12 3h4M14 1v4M3 12l8-6M3 8v4h5" stroke="#5d8fae" strokeDasharray="2 1" /><path d="M0 12h4v3H0z" fill="#69706a" /></Svg></button>
                <button aria-label="補正"><Svg w={16} h={16}><path d="M0 0h8v8H0z" fill="#e3e1e6" /><path d="M8 1v14M1 8h14" stroke="#777" strokeDasharray="2 1" /><path d="M8 5v6M5 8h6" stroke="#555" strokeWidth="2" /></Svg></button>
                <button aria-label="方位"><Svg w={17} h={16}><path d="M1.500 12V4l4 8V4" stroke="#4e9fd0" strokeWidth="2" /><path d="M8.500 1v14" stroke="#555" /><path d="M9 14l6-6" stroke="#888" /><path d="M10 2c3-1 4 1 4 4M12 4l2 2.500L16 4" stroke="#4e9fd0" strokeWidth="1.300" /></Svg></button>
                <button aria-label="その他" className="ml-1 mr-1"><ChevronWide /></button>
                <div className="h-4 w-px bg-[#888]" />
              </div>
              <button className="flex items-center gap-3 pl-9 text-[11px]">119.8741338°E 58.3690930°N <ChevronWide /></button>
              <div className="flex flex-1 items-center justify-end gap-[7px] text-[#98969b]">
                <div className="h-4 w-px bg-[#888]" />
                <button className="flex items-center gap-1 text-[11px]"><ZoomSel />選択フィーチャ: 0</button>
                <div className="h-4 w-px bg-[#888]" />
                <button aria-label="選択解除"><ClearSel /></button>
                <div className="h-4 w-px bg-[#888]" />
                <button aria-label="一時停止"><Svg w={12} h={14}><path d="M0 0h4.500v14H0zM7 0h4.500v14H7z" fill="#666469" /></Svg></button>
                <div className="h-4 w-px bg-[#888]" />
                <button aria-label="更新"><Svg w={17} h={16}><path d="M2 6.500C4 1.500 11 1 14 5M15 9.500C13 14.500 6 15 3 11" stroke="#5aa9d6" strokeWidth="2.500" /><path d="M16.500 0v7H10zM.5 16V9H7z" fill="#5aa9d6" /></Svg></button>
              </div>
            </div>
          </div>
        </section>

        {/* catalog pane */}
        <aside className="flex w-[303px] shrink-0 flex-col">
          <div className="flex-1 rounded-t border border-[#d0ced3] bg-[#faf8fe]">
            <div className="flex h-[29px] items-center gap-[9px] px-[6px]">
              <h2 className="flex-1 text-[14px] text-[#222]">カタログ</h2>
              <button aria-label="メニュー"><ChevronWide /></button><button aria-label="固定"><Pin /></button><button aria-label="閉じる"><Close /></button>
            </div>
            <div className="flex h-6 items-start gap-2 whitespace-nowrap px-[6px] text-[11px] leading-5">
              <button className="h-[22px] border-b-[3px] border-[#1180bd] font-bold">プロジェクト</button>
              <button>ポータル</button><button>コンピューター</button><button>お気に入り</button>
              <button aria-label="メニュー" className="ml-auto mr-[2px] pt-[5px]"><Svg w={14} h={13}><path d="M0 1.500h14M0 6.500h14M0 11.500h14" stroke="#4b494e" strokeWidth="3" /></Svg></button>
            </div>
            <div className="mt-[7px] flex items-center px-[5px]">
              <button aria-label="戻る" className="mr-1"><Svg w={18} h={18}><circle cx="9" cy="9" r="8.300" stroke="#b8b6bb" /><path d="M9 5L5 9l4 4M5 9h9" stroke="#b8b6bb" strokeWidth="1.500" /></Svg></button>
              <button aria-label="ホーム" className="flex h-6 w-5 items-center justify-center border border-r-0 border-[#c8c6cb]"><Svg w={12} h={12}><path d="M1 6l5-4.500L11 6M2.500 6v5.500h7V6M9 1.500v2" stroke="#b8b6bb" /><path d="M5 7h3v4H5z" fill="#cbb" /></Svg></button>
              <label className="flex h-6 flex-1 items-center gap-[10px] border border-[#929097] bg-white px-[6px]">
                <input aria-label="プロジェクト の検索" placeholder="プロジェクト の検索" className="min-w-0 flex-1 text-[11px] italic outline-none placeholder:text-[#444]" />
                <Search /><ChevronWide />
              </label>
            </div>
            <ul className="mt-[7px] pl-[13px] text-[11px]">
              {catalogItems.map(([name, icon]) => (
                <li key={name}><button className="flex h-6 items-center"><Collapsed /><span className="ml-[6px] mr-2">{icon}</span>{name}</button></li>
              ))}
            </ul>
          </div>
          <div className="flex h-5 text-[10px]">
            <button className="-mt-px h-[21px] w-[47px] rounded-b border border-t-0 border-[#d0ced3] bg-[#faf8fe] text-[#1c7cb0]">カタログ</button>
            <button className="px-[6px]">ジオプロセシング</button>
          </div>
        </aside>
      </main>
    </div>
  );
}
